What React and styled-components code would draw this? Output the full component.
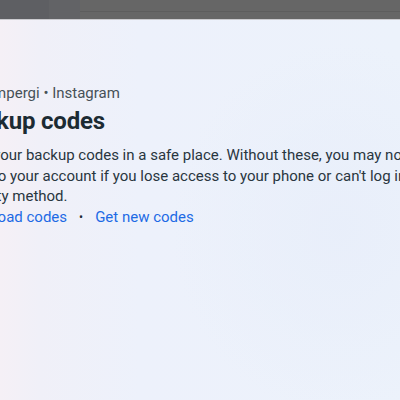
import React from "react";
import styled, { createGlobalStyle } from "styled-components";

const Global = createGlobalStyle`
  html, body { margin: 0; padding: 0; background: #ecf1fb; overflow: hidden; }
  body { font-family: Roboto, "Noto Sans", sans-serif; }
`;

const Screen = styled.div`
  width: 400px;
  height: 400px;
  display: flex;
  flex-direction: column;
  overflow: hidden;
`;

const Backdrop = styled.div`
  height: 19px;
  flex: none;
  display: flex;
  border-bottom: 1px solid #cbcbcf;
`;

const BackdropCell = styled.div`
  width: ${(p) => p.$w || "auto"};
  flex: ${(p) => (p.$w ? "none" : "1")};
  background: ${(p) => p.$bg};
  display: flex;
  flex-direction: column;
  justify-content: flex-start;
`;

const Rule = styled.div`
  margin-top: 11px;
  height: 1px;
  background: #5d5d5d;
`;

const Panel = styled.div`
  flex: 1;
  background:
    radial-gradient(ellipse 60% 70% at 85% 55%, rgba(232, 238, 250, 0.9), rgba(232, 238, 250, 0) 70%),
    linear-gradient(90deg, #f5f0f6 0px, #f0f0f8 40px, #edf1fb 140px, #ecf2fb 400px);
  padding-top: 63px;
`;

const Content = styled.div`
  margin-left: -44px;
  width: 560px;
  color: #1c2b33;
`;

const Account = styled.div`
  font-size: 15px;
  line-height: 20px;
  color: #465057;
  white-space: nowrap;
`;

const Title = styled.h2`
  margin: 3px 0 0;
  font-size: 24px;
  line-height: 30px;
  font-weight: 700;
  color: #1c2b33;
  letter-spacing: -0.2px;
`;

const Body = styled.p`
  margin: 9px 0 0;
  font-size: 15px;
  line-height: 20.5px;
  color: #29363f;
  white-space: nowrap;
`;

const Actions = styled.div`
  margin-top: 0;
  display: flex;
  align-items: center;
  gap: 9px;
  font-size: 15px;
  line-height: 20px;
`;

const ActionLink = styled.a`
  color: #1d6ae5;
  text-decoration: none;
  cursor: pointer;
`;

const Dot = styled.span`
  color: #1c2b33;
  font-size: 12px;
  padding: 0 3px;
`;

export default function App() {
  return (
    <>
      <Global />
      <Screen>
        <Backdrop>
          <BackdropCell $w="49px" $bg="#5e5f63" />
          <BackdropCell $w="31px" $bg="#626366" />
          <BackdropCell $bg="#666666">
            <Rule />
          </BackdropCell>
        </Backdrop>
        <Panel>
          <Content>
            <Account>sarahmpergi • Instagram</Account>
            <Title>Backup codes</Title>
            <Body>
              Keep your backup codes in a safe place. Without these, you may not be able to
              <br />
              get into your account if you lose access to your phone or can't log in with your
              <br />
              security method.
            </Body>
            <Actions>
              <ActionLink>Download codes</ActionLink>
              <Dot>•</Dot>
              <ActionLink>Get new codes</ActionLink>
            </Actions>
          </Content>
        </Panel>
      </Screen>
    </>
  );
}
